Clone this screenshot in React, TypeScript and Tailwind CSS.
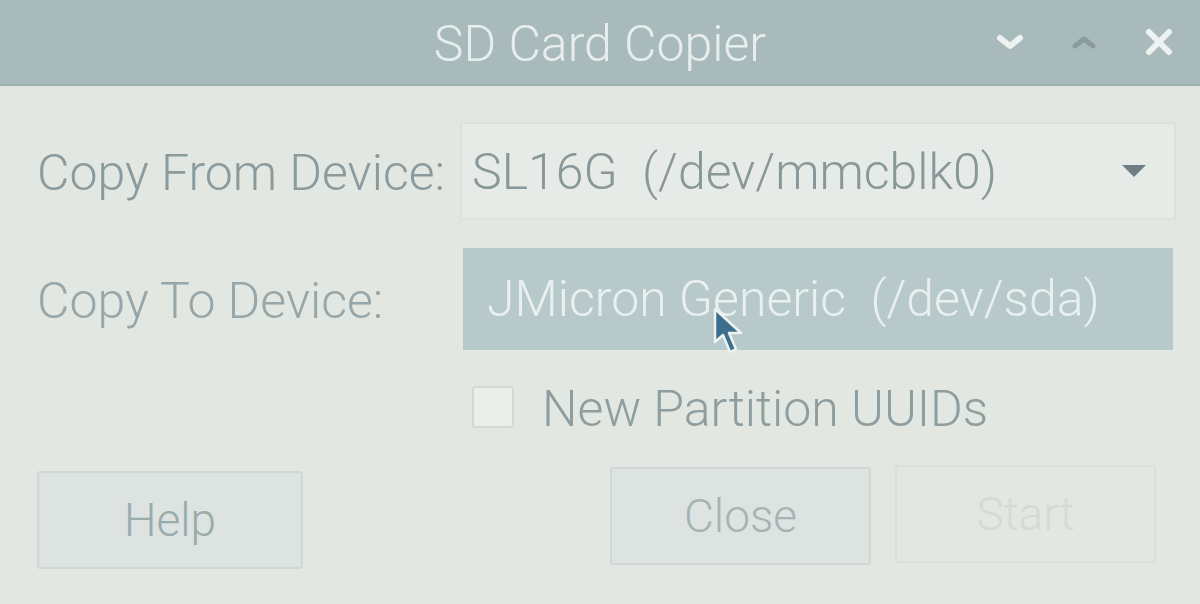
export default function App() {
  return (
    <div
      className="w-[1200px] h-[604px] flex flex-col bg-[#e2e7e2] overflow-hidden relative font-light"
      style={{ fontFamily: "Roboto, 'Liberation Sans', sans-serif" }}
    >
      {/* Title bar */}
      <div className="h-[86px] shrink-0 bg-[#a9babd] border-b-2 border-[#9fb0b3] flex items-center relative">
        <span className="flex-1 text-center text-[50px] leading-none text-[#e8eeec] pt-[4px] pl-[0px]">
          SD Card Copier
        </span>
        <div className="absolute right-[26px] top-0 h-full flex items-center gap-[46px]">
          <svg width="28" height="18" viewBox="0 0 28 18">
            <path d="M4 5 L14 13 L24 5" fill="none" stroke="#eef2f0" strokeWidth="6" strokeLinecap="round" strokeLinejoin="round" />
          </svg>
          <svg width="28" height="18" viewBox="0 0 28 18">
            <path d="M5 13 L14 6 L23 13" fill="none" stroke="#8a9b9f" strokeWidth="5" strokeLinecap="round" strokeLinejoin="round" />
          </svg>
          <svg width="30" height="30" viewBox="0 0 30 30">
            <path d="M5 5 L25 25 M25 5 L5 25" fill="none" stroke="#eef2f0" strokeWidth="6" strokeLinecap="round" />
          </svg>
        </div>
      </div>

      {/* Body */}
      <div className="flex-1 flex flex-col pl-[37px] pr-[24px] pt-[36px]">
        <div className="flex items-center h-[98px]">
          <span className="w-[423px] text-[50px] text-[#8a9a9d] leading-none pt-[4px] whitespace-nowrap">Copy From Device:</span>
          <div className="flex-1 h-full bg-[#e7ebe7] border-2 border-[#dbe1dd] flex items-center pl-[10px] pr-[26px]">
            <span className="flex-1 text-[50px] leading-none text-[#889799] whitespace-pre pt-[2px]">SL16G  (/dev/mmcblk0)</span>
            <svg width="28" height="14" viewBox="0 0 28 14">
              <path d="M2 1 L26 1 L14 13 Z" fill="#6f7d84" />
            </svg>
          </div>
        </div>

        <div className="flex items-center h-[102px] mt-[28px]">
          <span className="w-[426px] text-[50px] text-[#97a6a8] leading-none pt-[4px]">Copy To Device:</span>
          <div className="w-[710px] h-full bg-[#b7c9cb] flex items-center pl-[24px]">
            <span className="text-[50px] leading-none text-[#e9f0ef] whitespace-pre">JMicron Generic  (/dev/sda)</span>
          </div>
        </div>

        <div className="flex items-center h-[45px] mt-[34px] pl-[435px] gap-[28px]">
          <div className="w-[42px] h-[42px] bg-[#eceee9] border-2 border-[#d3dad6] rounded-[3px]" />
          <span className="text-[50px] leading-none text-[#8e9d9f] pt-[4px]">New Partition UUIDs</span>
        </div>

        <div className="flex items-start mt-[38px]">
          <button className="w-[266px] h-[98px] mt-[4px] bg-[#dce3e0] border-2 border-[#cfd8d5] rounded-[3px] text-[46px] text-[#9aabac] leading-none">
            Help
          </button>
          <button className="w-[261px] h-[98px] ml-[307px] bg-[#dde3e0] border-2 border-[#d0d8d5] rounded-[3px] text-[46px] text-[#a5b3b4] leading-none">
            Close
          </button>
          <button className="w-[261px] h-[98px] ml-[24px] -mt-[2px] bg-transparent border-2 border-[#d9e0dc] rounded-[3px] text-[46px] text-[#d3dad7] leading-none">
            Start
          </button>
        </div>
      </div>

      {/* Mouse pointer */}
      <svg className="absolute left-[712px] top-[306px]" width="34" height="52" viewBox="0 0 34 52">
        <path
          d="M3 3 L3 36 L11 29 L18 46 L24 43 L17 27 L29 27 Z"
          fill="#3d6e8e"
          stroke="#eef3f2"
          strokeWidth="2.5"
          strokeLinejoin="round"
        />
      </svg>
    </div>
  )
}
